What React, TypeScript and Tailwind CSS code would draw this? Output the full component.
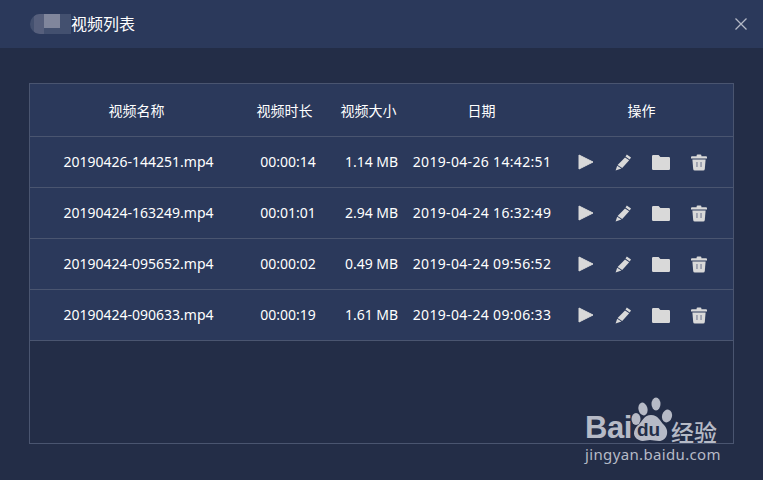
const rows = [
  ['20190426-144251.mp4', '00:00:14', '1.14 MB', '2019-04-26 14:42:51'],
  ['20190424-163249.mp4', '00:01:01', '2.94 MB', '2019-04-24 16:32:49'],
  ['20190424-095652.mp4', '00:00:02', '0.49 MB', '2019-04-24 09:56:52'],
  ['20190424-090633.mp4', '00:00:19', '1.61 MB', '2019-04-24 09:06:33'],
]

function ActionIcons() {
  return (
    <div className="flex w-[180px] items-center pl-[26px]">
      <svg width="16" height="16" viewBox="0 0 16 16" className="mr-[21px]">
        <path d="M1 1 L15 8 L1 15 Z" fill="#d9d9d9" stroke="#d9d9d9" strokeWidth="1" strokeLinejoin="round" />
      </svg>
      <svg width="17" height="17" viewBox="0 0 17 17" className="mr-[20px]">
        <path d="M11.8 0.6 L16 3.4 L14.7 5.4 L10.5 2.6 Z" fill="#d9d9d9" />
        <path d="M10 3.4 L14.2 6.2 L7.2 14 L2.6 11 Z" fill="#d9d9d9" />
        <path d="M2.2 11.8 L6.4 14.6 L0.6 16.6 Z" fill="#d9d9d9" />
      </svg>
      <svg width="18" height="15" viewBox="0 0 18 15" className="mr-[21px]">
        <path d="M0 1.2 Q0 0 1.2 0 H6.6 L8.4 2 H16.8 Q18 2 18 3.2 V13.8 Q18 15 16.8 15 H1.2 Q0 15 0 13.8 Z" fill="#d9d9d9" />
      </svg>
      <svg width="16" height="17" viewBox="0 0 16 17">
        <path d="M5.6 1.4 Q5.6 0.4 6.6 0.4 H9.4 Q10.4 0.4 10.4 1.4 V2.2 H15 Q16 2.2 16 3.2 V4.6 H0 V3.2 Q0 2.2 1 2.2 H5.6 Z" fill="#d9d9d9" />
        <path d="M1.4 5.6 H14.6 L13.8 15 Q13.6 16.6 12.2 16.6 H3.8 Q2.4 16.6 2.2 15 Z" fill="#d9d9d9" />
        <rect x="5.2" y="8" width="1.5" height="5" fill="#8f95a6" />
        <rect x="9.3" y="8" width="1.5" height="5" fill="#8f95a6" />
      </svg>
    </div>
  )
}

function Watermark() {
  return (
    <div className="pointer-events-none absolute left-[584px] top-[397px] h-[68px] w-[140px] text-[#b6bac6]">
      <span className="absolute left-[1px] top-[13px] text-[31px] font-bold leading-[36px] tracking-[-0.5px] [font-family:'Liberation_Sans',sans-serif]">Bai</span>
      <svg width="44" height="47" viewBox="0 0 44 47" className="absolute left-[46px] top-0">
        <ellipse cx="13" cy="12" rx="4.5" ry="6.5" fill="#b6bac6" transform="rotate(-15 13 12)" />
        <ellipse cx="26" cy="7" rx="4.5" ry="6.5" fill="#b6bac6" />
        <ellipse cx="37" cy="19" rx="5" ry="6.5" fill="#b6bac6" transform="rotate(15 37 19)" />
        <ellipse cx="6" cy="22" rx="4.5" ry="6" fill="#b6bac6" />
        <path d="M21 18 C28 18 30 24 34 28 C40 34 37 44 29 44 C25 44 23 43 20 43 C16 43 13 45 9 43 C2 40 3 33 8 28 C13 24 14 18 21 18 Z" fill="#b6bac6" />
      </svg>
      <span className="absolute left-[53px] top-[22px] text-[19px] font-bold leading-[22px] text-[#232d47] [font-family:'Liberation_Sans',sans-serif]">du</span>
      <span className="absolute left-[87px] top-[21px] text-[23px] font-medium leading-[26px] [font-family:'Noto_Sans_CJK_SC',sans-serif]">经验</span>
      <span className="absolute left-[1px] top-[48px] text-[15px] leading-[18px] tracking-[0.35px] [font-family:'Noto_Sans',sans-serif]">jingyan.baidu.com</span>
    </div>
  )
}

export default function App() {
  return (
    <div className="relative flex h-[480px] w-[763px] flex-col overflow-hidden bg-[#232d47] text-white [font-family:'Noto_Sans','Noto_Sans_CJK_SC',sans-serif]">
      <div className="flex h-[48px] shrink-0 items-center justify-between bg-[#2b395b] pl-[30px] pr-[15px]">
        <div className="flex items-center">
          <div className="flex h-[20px] w-[41px] overflow-hidden rounded-l-[10px] bg-[#43506f]">
            <div className="ml-[4px] h-full w-[10px] bg-[#565f7c]" />
            <div className="h-[14px] w-[16px] bg-[#80869c]" />
          </div>
          <span className="text-[16px] leading-none">视频列表</span>
        </div>
        <svg width="14" height="14" viewBox="0 0 14 14">
          <path d="M1.5 1.5 L12.5 12.5 M12.5 1.5 L1.5 12.5" stroke="#b4b9c6" strokeWidth="1.3" fill="none" />
        </svg>
      </div>

      <div className="flex flex-1 flex-col px-[29px] pb-[36px] pt-[35px]">
        <div className="flex h-[361px] w-[705px] flex-col border border-[#4a5570]">
          <div className="flex h-[53px] items-center border-b border-[#4a5570] bg-[#2b395b] text-[14px]">
            <div className="w-[213px] text-center">视频名称</div>
            <div className="w-[83px] text-center">视频时长</div>
            <div className="w-[85px] text-center">视频大小</div>
            <div className="w-[141px] text-center">日期</div>
            <div className="w-[179px] text-center">操作</div>
          </div>
          {rows.map((r) => (
            <div key={r[0]} className="flex h-[51px] items-center border-b border-[#4a5570] bg-[#2b395b] text-[14px] text-white">
              <div className="w-[217px] pb-[2px] text-center">{r[0]}</div>
              <div className="w-[82px] pb-[2px] text-center">{r[1]}</div>
              <div className="w-[83px] pb-[2px] pl-[2px] text-center">{r[2]}</div>
              <div className="w-[140px] whitespace-nowrap pb-[2px] text-center tracking-[0.33px]">{r[3]}</div>
              <ActionIcons />
            </div>
          ))}
        </div>
      </div>

      <Watermark />
    </div>
  )
}
